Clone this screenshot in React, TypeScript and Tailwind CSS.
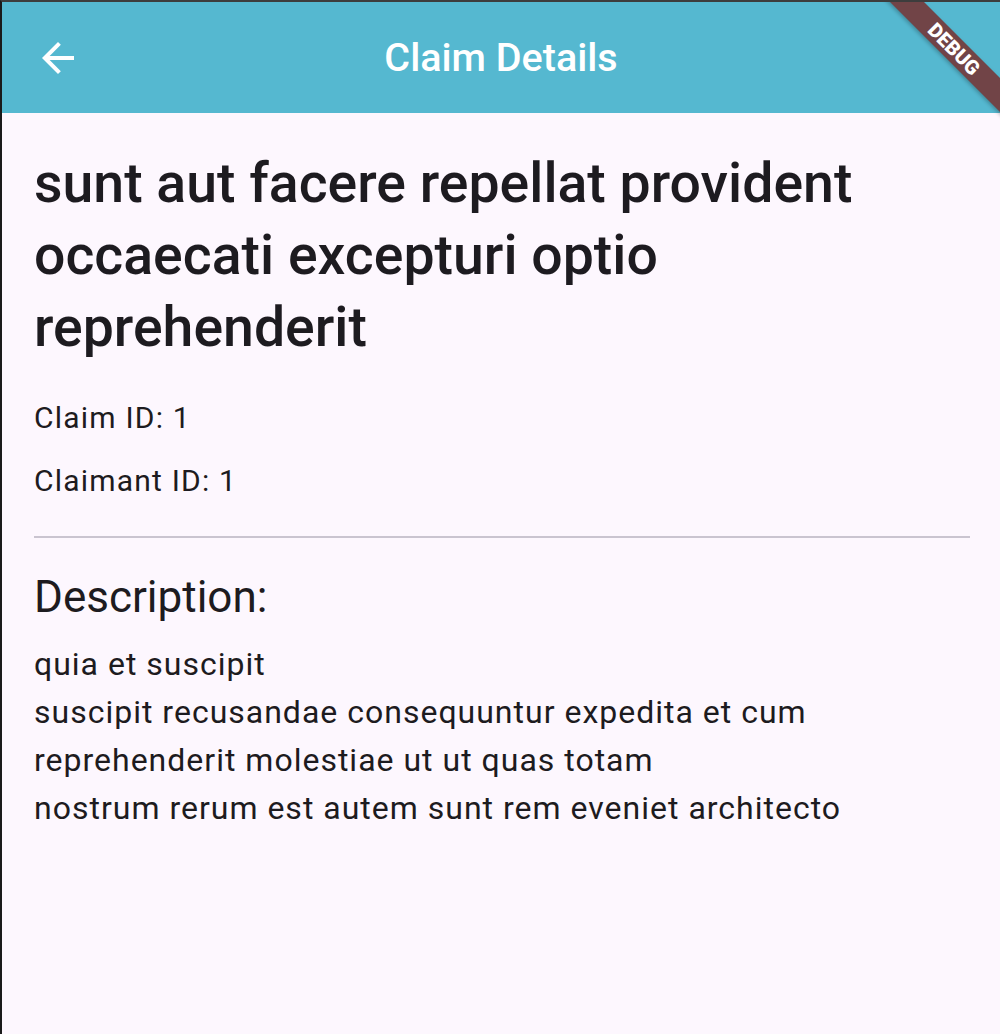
export default function App() {
    return (
        <div className="relative w-[1000px] h-[1034px] overflow-hidden bg-[#FDF7FE] border-t-2 border-l-2 border-t-[#3d3d3d] border-l-[#1a1a1a] font-['Roboto',sans-serif] text-[#1D1B20]">
            {/* app bar */}
            <div className="relative flex items-center h-[111px] bg-[#55B8D0] text-white">
                <div className="w-[112px] flex items-center justify-center">
                    <svg width="48" height="48" viewBox="0 0 24 24" fill="white">
                        <path d="M20 11H7.83l5.59-5.59L12 4l-8 8 8 8 1.41-1.41L7.83 13H20v-2z" />
                    </svg>
                </div>
                <div className="flex-1 text-center text-[39.5px] font-medium leading-none pr-[112px]">Claim Details</div>
            </div>

            <div className="pl-[32px] pr-[30px] pt-[35px]">
                <h1 className="text-[55.4px] leading-[72px] font-medium">
                    sunt aut facere repellat provident occaecati excepturi optio reprehenderit
                </h1>
                <p className="mt-[30px] text-[30px] leading-[48px] tracking-[1.2px]">Claim ID: 1</p>
                <p className="mt-[15px] text-[30px] leading-[48px] tracking-[1.2px]">Claimant ID: 1</p>
                <div className="mt-[31px] h-[2px] bg-[#CAC4D0]" />
                <h2 className="mt-[31px] text-[44px] leading-[56px]">Description:</h2>
                <p className="mt-[15px] text-[32px] leading-[48px] tracking-[1px] whitespace-pre-line">
                    {"quia et suscipit\nsuscipit recusandae consequuntur expedita et cum\nreprehenderit molestiae ut ut quas totam\nnostrum rerum est autem sunt rem eveniet architecto"}
                </p>
            </div>

            {/* debug banner */}
            <div className="absolute left-[855px] top-[35px] w-[194px] h-[24px] rotate-45 bg-[#714447] shadow-[0_2px_4px_rgba(0,0,0,0.25)] flex items-center justify-center">
                <span className="text-white text-[20px] font-black leading-none">DEBUG</span>
            </div>
        </div>
    )
}
